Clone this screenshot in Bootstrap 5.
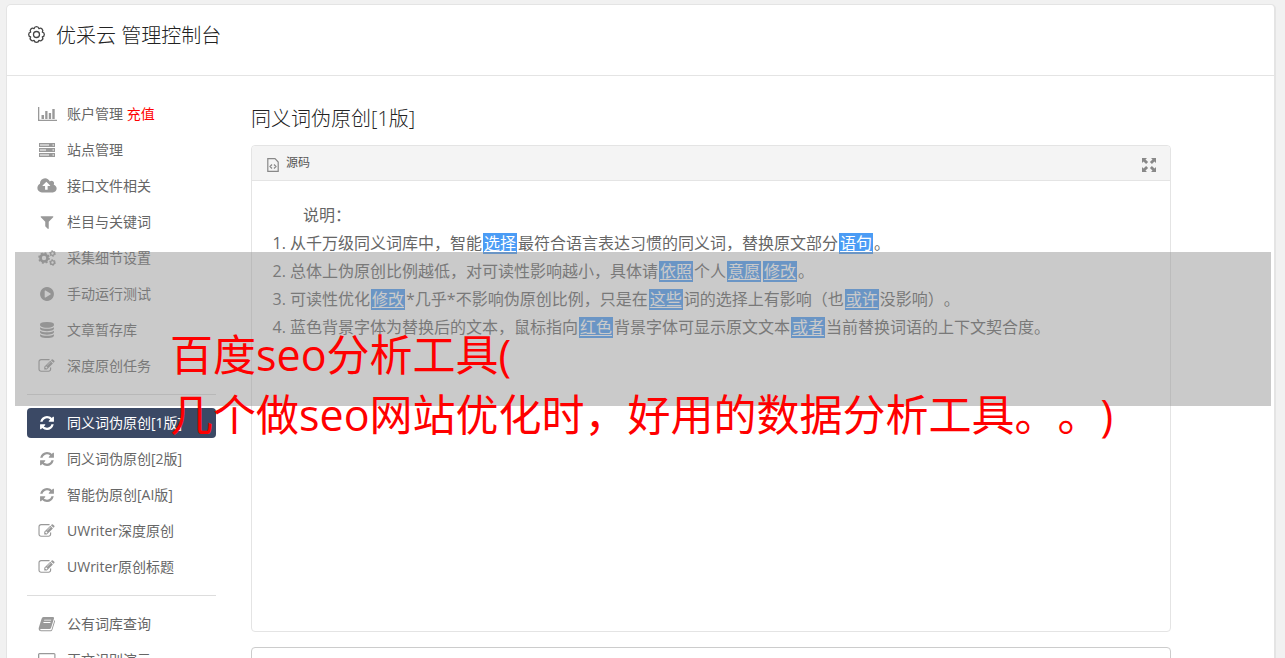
<!DOCTYPE html>
<html lang="zh-CN">
<head>
<meta charset="utf-8">
<meta name="viewport" content="width=device-width, initial-scale=1">
<title>优采云 管理控制台</title>
<link href="https://cdn.jsdelivr.net/npm/bootstrap@5.3.0/dist/css/bootstrap.min.css" rel="stylesheet">
<style>
body { background: #f1f1f1; color: #666; font-family: "Open Sans", "Noto Sans CJK SC", sans-serif; font-size: 14px; font-weight: 400; text-spacing-trim: space-all; }
.console { margin: 4px 9px 0 6px; border: 1px solid #e4e4e4; border-right-width: 2px; border-radius: 5px 5px 0 0; }
.console-head { height: 71px; padding: 16px 20px 0; gap: 10px; border-bottom: 1px solid #e4e4e4; color: #333; }
.console-head svg { margin-top: 4px; }
.console-head h1, .page-title { font-size: 20px; line-height: 30px; font-weight: 300; color: #222; margin: 0; }
.side { width: 189px; margin: 23px 35px 0 20px; }
.side .nav { gap: 6px; }
.side .nav-link { height: 30px; padding: 0 10px; gap: 10px; line-height: 30px; color: #666; border-radius: 4px; white-space: nowrap; }
.side .nav-link svg { width: 20px; height: 18px; color: #999; fill: currentColor; flex: none; }
.side .nav-link.active { background: #3b4965; color: #fff; }
.side .nav-link.active svg { color: #fff; }
.side hr { margin: 13px 0; border-color: #ddd; opacity: 1; }
.recharge { color: #f00; }
.main-col { padding: 28px 103px 0 0; }
.main-col .page-title { margin-bottom: 11px; }
.source { border: 1px solid #e4e4e4; border-radius: 4px; height: 487px; }
.source-head { height: 35px; padding: 0 13px 0 15px; background: #f4f4f4; border-bottom: 1px solid #e4e4e4; border-radius: 4px 4px 0 0; font-size: 12px; }
.source-head .btn { font-size: 12px; color: #555; gap: 7px; }
.source-body { padding: 20px 19px; font-size: 16px; line-height: 28px; }
.source-body p { margin: 0; padding-left: 32px; }
.source-body ol { margin: 0; padding-left: 19px; }
.source-body a { background: #4b9cf5; color: #fff; padding: 0 1px; margin: 0 1px; display: inline-block; line-height: 21px; height: 21px; text-underline-offset: 2px; }
.result { border: 1px solid #ccc; border-radius: 4px; margin-top: 15px; height: 80px; resize: none; }
.caption-band { position: absolute; left: 15px; right: 14px; top: 252px; height: 154px; padding: 73px 0 0 155px; background: rgba(143,143,143,.47); color: #f00; font-size: 43px; line-height: 60px; white-space: nowrap; }
</style>
</head>
<body class="vh-100 overflow-hidden position-relative">
<svg class="d-none">
  <symbol id="i-chart" viewBox="0 0 20 18"><path d="M1 2h1.300v12.700H20V16H1zM4.500 10H7v4H4.500zM8.200 6h2.300v8H8.200zM11.800 8h2.300v6h-2.300zM15.300 4h2.400v10h-2.400z"/></symbol>
  <symbol id="i-server" viewBox="0 0 20 18"><path fill-rule="evenodd" d="M2 2h16v4H2zm1 1.500v1h9v-1zM15.500 3.500v1h1.500v-1zM2 7h16v4H2zm1 1.500v1h6v-1zM15.500 8.500v1h1.500v-1zM2 12h16v4H2zm1 1.500v1h9v-1zM15.500 13.500v1h1.500v-1z"/></symbol>
  <symbol id="i-cloud" viewBox="-64 0 1920 1792"><path d="M1216 864q0-14-9-23l-352-352q-9-9-23-9t-23 9l-351 351q-10 12-10 24 0 14 9 23t23 9h224v352q0 13 9.500 22.500t22.500 9.500h192q13 0 22.500-9.500t9.500-22.500v-352h224q13 0 22.500-9.500t9.500-22.500zm640 288q0 159-112.500 271.500t-271.500 112.500h-1088q-185 0-316.500-131.500t-131.500-316.500q0-130 70-240t188-165q-2-30-2-43 0-212 150-362t362-150q156 0 285.500 87t188.500 231q71-62 166-62 106 0 181 75t75 181q0 76-41 138 130 31 213.500 135.500t83.500 238.500z"/></symbol>
  <symbol id="i-filter" viewBox="-100 -100 1992 1992"><path d="M1595 295q17 41-14 70l-493 493v742q0 42-39 59-13 5-25 5-27 0-45-19l-256-256q-19-19-19-45v-486l-493-493q-31-29-14-70 17-39 59-39h1280q42 0 59 39z"/></symbol>
  <symbol id="i-cogs" viewBox="0 0 20 18"><g fill="none" stroke="currentColor"><circle cx="7" cy="9" r="3.500" stroke-width="2.600"/><circle cx="7" cy="9" r="5" stroke-width="1.600" stroke-dasharray="2 1.927"/><circle cx="15.500" cy="4.500" r="1.900" stroke-width="1.400"/><circle cx="15.500" cy="4.500" r="2.900" stroke-width="1" stroke-dasharray="1.500 1.537"/><circle cx="15.500" cy="13.500" r="1.900" stroke-width="1.400"/><circle cx="15.500" cy="13.500" r="2.900" stroke-width="1" stroke-dasharray="1.500 1.537"/></g></symbol>
  <symbol id="i-play" viewBox="-100 -100 1992 1992"><path d="M896 128q209 0 385.500 103t279.500 279.500 103 385.500-103 385.500-279.500 279.500-385.500 103-385.500-103-279.500-279.500-103-385.500 103-385.500 279.500-279.500 385.500-103zm384 823q32-18 32-55t-32-55l-544-320q-31-19-64-1-32 19-32 56v640q0 37 32 56 16 8 32 8 17 0 32-9z"/></symbol>
  <symbol id="i-db" viewBox="-100 -100 1992 1992"><path d="M896 768q237 0 443-43t325-127v170q0 69-103 128t-280 93.500-385 34.500-385-34.500-280-93.500-103-128v-170q119 84 325 127t443 43zm0 768q237 0 443-43t325-127v170q0 69-103 128t-280 93.500-385 34.500-385-34.500-280-93.500-103-128v-170q119 84 325 127t443 43zm0-384q237 0 443-43t325-127v170q0 69-103 128t-280 93.500-385 34.500-385-34.500-280-93.500-103-128v-170q119 84 325 127t443 43zm0-1152q208 0 385 34.500t280 93.500 103 128v128q0 69-103 128t-280 93.500-385 34.500-385-34.500-280-93.500-103-128v-128q0-69 103-128t280-93.500 385-34.500z"/></symbol>
  <symbol id="i-edit" viewBox="-50 -100 1992 1992"><path d="M888 1184l116-116-152-152-116 116v56h96v96h56zm440-720q-16-16-33 1l-350 350q-17 17-1 33t33-1l350-350q17-17 1-33zm80 594v190q0 119-84.500 203.500t-203.500 84.500h-832q-119 0-203.500-84.500t-84.500-203.500v-832q0-119 84.500-203.500t203.500-84.500h832q63 0 117 25 15 7 18 23 3 17-9 29l-49 49q-14 14-32 8-23-6-45-6h-832q-66 0-113 47t-47 113v832q0 66 47 113t113 47h832q66 0 113-47t47-113v-126q0-13 9-22l64-64q15-15 35-7t20 29zm-96-738l288 288-672 672h-288v-288zm444 132l-92 92-288-288 92-92q28-28 68-28t68 28l152 152q28 28 28 68t-28 68z"/></symbol>
  <symbol id="i-refresh" viewBox="-228 -228 1992 1992"><path d="M1511 928q0 5-1 7-64 268-268 434.500t-478 166.500q-146 0-282.500-55t-243.500-157l-129 129q-19 19-45 19t-45-19-19-45v-448q0-26 19-45t45-19h448q26 0 45 19t19 45-19 45l-137 137q71 66 161 102t187 36q134 0 250-65t186-179q11-17 53-117 8-23 30-23h192q13 0 22.500 9.500t9.500 22.500zm25-800v448q0 26-19 45t-45 19h-448q-26 0-45-19t-19-45 19-45l138-138q-148-137-349-137-134 0-250 65t-186 179q-11 17-53 117-8 23-30 23h-199q-13 0-22.500-9.500t-9.500-22.500v-7q65-268 270-434.500t480-166.500q146 0 284 55.500t245 156.500l130-129q19-19 45-19t45 19 19 45z"/></symbol>
  <symbol id="i-book" viewBox="0 0 20 18"><path fill-rule="evenodd" d="M6.500 2H16q1.500 0 1 1.500L14 13q-.4 1-1.500 1H4q-1 0-.8.700T4 15.300h9.700q.6 0 .8-.6L17.500 5q.8.500.500 1.500L15.300 15q-.4 1.200-1.600 1.200H4q-2 0-2.300-2Q1.600 13 2 12L4.500 4Q5 2 6.500 2zM7.300 4.700l-.3.900h7l.3-.9zM6.600 7l-.3.900h7l.3-.9z"/></symbol>
  <symbol id="i-laptop" viewBox="0 0 20 18"><path fill-rule="evenodd" d="M2.500 2h14.500q1.500 0 1.500 1.500V12q0 1.500-1.500 1.500h-14.500Q1 13.500 1 12V3.500Q1 2 2.500 2zM2.300 3.300v9h15v-9zM6 15h8v1.200H6z"/></symbol>
</svg>

<div class="console bg-white">
  <header class="console-head d-flex align-items-start">
    <svg width="19" height="19" viewBox="0 0 19 19" fill="none" stroke="#444" stroke-width="1.300" stroke-linejoin="round"><path d="M15.320 7.090A2.450 2.450 0 0 1 15.320 11.910A2.450 2.450 0 0 1 11.910 15.320A2.450 2.450 0 0 1 7.090 15.320A2.450 2.450 0 0 1 3.680 11.910A2.450 2.450 0 0 1 3.680 7.090A2.450 2.450 0 0 1 7.090 3.680A2.450 2.450 0 0 1 11.910 3.680A2.450 2.450 0 0 1 15.320 7.090z"/><circle cx="9.500" cy="9.500" r="3"/></svg>
    <h1>优采云 管理控制台</h1>
  </header>
  <div class="d-flex">
    <aside class="side flex-shrink-0">
      <nav class="nav flex-column">
        <a class="nav-link d-flex align-items-center" href="#"><svg><use href="#i-chart"/></svg><span>账户管理 <span class="recharge">充值</span></span></a>
        <a class="nav-link d-flex align-items-center" href="#"><svg><use href="#i-server"/></svg>站点管理</a>
        <a class="nav-link d-flex align-items-center" href="#"><svg><use href="#i-cloud"/></svg>接口文件相关</a>
        <a class="nav-link d-flex align-items-center" href="#"><svg><use href="#i-filter"/></svg>栏目与关键词</a>
        <a class="nav-link d-flex align-items-center" href="#"><svg><use href="#i-cogs"/></svg>采集细节设置</a>
        <a class="nav-link d-flex align-items-center" href="#"><svg><use href="#i-play"/></svg>手动运行测试</a>
        <a class="nav-link d-flex align-items-center" href="#"><svg><use href="#i-db"/></svg>文章暂存库</a>
        <a class="nav-link d-flex align-items-center" href="#"><svg><use href="#i-edit"/></svg>深度原创任务</a>
      </nav>
      <hr>
      <nav class="nav flex-column">
        <a class="nav-link active d-flex align-items-center" href="#" aria-current="page"><svg><use href="#i-refresh"/></svg>同义词伪原创[1版]</a>
        <a class="nav-link d-flex align-items-center" href="#"><svg><use href="#i-refresh"/></svg>同义词伪原创[2版]</a>
        <a class="nav-link d-flex align-items-center" href="#"><svg><use href="#i-refresh"/></svg>智能伪原创[AI版]</a>
        <a class="nav-link d-flex align-items-center" href="#"><svg><use href="#i-edit"/></svg>UWriter深度原创</a>
        <a class="nav-link d-flex align-items-center" href="#"><svg><use href="#i-edit"/></svg>UWriter原创标题</a>
      </nav>
      <hr>
      <nav class="nav flex-column">
        <a class="nav-link d-flex align-items-center" href="#"><svg><use href="#i-book"/></svg>公有词库查询</a>
        <a class="nav-link d-flex align-items-center" href="#"><svg><use href="#i-laptop"/></svg>正文识别演示</a>
      </nav>
    </aside>
    <main class="main-col flex-grow-1">
      <h2 class="page-title">同义词伪原创[1版]</h2>
      <section class="source">
        <div class="source-head d-flex align-items-center justify-content-between">
          <button type="button" class="btn p-0 border-0 d-flex align-items-center"><svg class="mt-1" width="12" height="14" viewBox="0 0 12 14" fill="none" stroke="#888" stroke-width="1.200"><path d="M.8.700H8L11.200 4v9.300H.8zM5 6.500 3 8.500l2 2M7 6.500l2 2-2 2"/></svg>源码</button>
          <button type="button" class="btn p-0 border-0 d-flex" aria-label="全屏"><svg class="mt-1" width="16" height="16" viewBox="0 0 16 16" fill="#888"><path d="M1 1h5L4.500 2.500l2.600 2.600-2 2L2.500 4.500 1 6zM15 1v5l-1.500-1.500-2.600 2.600-2-2 2.600-2.600L10 1zM1 15v-5l1.500 1.500 2.600-2.600 2 2-2.600 2.600L6 15zM15 15h-5l1.500-1.500-2.600-2.600 2-2 2.600 2.600L15 10z"/></svg></button>
        </div>
        <div class="source-body">
          <p>说明：</p>
          <ol>
            <li>从千万级同义词库中，智能<a href="#">选择</a>最符合语言表达习惯的同义词，替换原文部分<a href="#">语句</a>。</li>
            <li>总体上伪原创比例越低，对可读性影响越小，具体请<a href="#">依照</a>个人<a href="#">意愿</a><a href="#">修改</a>。</li>
            <li>可读性优化<a href="#">修改</a>*几乎*不影响伪原创比例，只是在<a href="#">这些</a>词的选择上有影响（也<a href="#">或许</a>没影响）。</li>
            <li>蓝色背景字体为替换后的文本，鼠标指向<a href="#">红色</a>背景字体可显示原文文本<a href="#">或者</a>当前替换词语的上下文契合度。</li>
          </ol>
        </div>
      </section>
      <textarea class="result d-block w-100" aria-label="结果"></textarea>
    </main>
  </div>
</div>
<div class="caption-band">百度seo分析工具(<br>几个做seo网站优化时，好用的数据分析工具。。)</div>
<script src="https://cdn.jsdelivr.net/npm/bootstrap@5.3.0/dist/js/bootstrap.bundle.min.js"></script>
</body>
</html>
